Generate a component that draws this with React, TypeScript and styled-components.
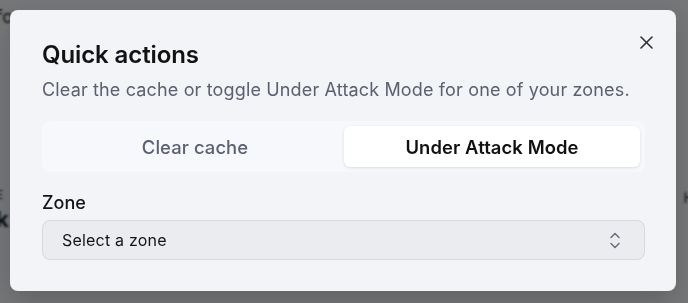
import React, { useState } from "react";
import styled, { createGlobalStyle } from "styled-components";

const Global = createGlobalStyle`
  html, body { margin: 0; padding: 0; }
  body {
    width: 688px; height: 303px; overflow: hidden;
    font-family: Inter, "Noto Sans", sans-serif;
    background: #e9eaee;
  }
`;

const Page = styled.div`
  position: relative;
  width: 688px;
  height: 303px;
  overflow: hidden;
  background: #eef0f3;
  display: flex;
  justify-content: space-between;
`;

const BackText = styled.div<{ $bold?: boolean; $size: number }>`
  font-size: ${(p) => p.$size}px;
  font-weight: ${(p) => (p.$bold ? 700 : 400)};
  color: #111;
  line-height: 1.2;
`;

const BackLayout = styled.div`
  display: flex;
  flex-direction: column;
  gap: 160px;
  padding: 6px 0 0 0;
  margin-left: -4px;
`;

const BackRight = styled.div`
  padding-top: 190px;
  margin-right: -6px;
  color: #555;
`;

const BackGroup = styled.div`
  display: flex;
  flex-direction: column;
  gap: 4px;
`;

const Overlay = styled.div`
  position: absolute;
  inset: 0;
  background: rgba(20, 20, 20, 0.55);
  backdrop-filter: blur(1px);
  display: flex;
  align-items: flex-start;
  justify-content: flex-start;
  padding: 10px 0 0 10px;
`;

const Dialog = styled.div`
  position: relative;
  box-sizing: border-box;
  width: 666px;
  height: 281px;
  background: #f3f4f8;
  border-radius: 8px;
  padding: 29px 32px 0 32px;
  display: flex;
  flex-direction: column;
  box-shadow: 0 10px 30px rgba(0, 0, 0, 0.2);
`;

const Title = styled.h2`
  margin: 0;
  font-size: 24px;
  line-height: 32px;
  font-weight: 600;
  color: #121212;
  letter-spacing: -0.1px;
`;

const Description = styled.p`
  margin: 7px 0 0 0;
  font-size: 18px;
  line-height: 24px;
  color: #5b6070;
  letter-spacing: 0.15px;
`;

const CloseButton = styled.button`
  position: absolute;
  top: 20px;
  right: 18px;
  width: 24px;
  height: 24px;
  padding: 0;
  border: none;
  background: transparent;
  display: flex;
  align-items: center;
  justify-content: center;
  color: #303236;
  cursor: pointer;
`;

const TabList = styled.div`
  margin-top: 19px;
  display: grid;
  grid-template-columns: 1fr 1fr;
  gap: 1px;
  padding: 5px;
  border-radius: 8px;
  background: #f7f8fb;
  width: 603px;
  box-sizing: border-box;
`;

const Tab = styled.button<{ $active?: boolean }>`
  height: 41px;
  border: none;
  border-radius: 6px;
  font-family: inherit;
  font-size: 18.4px;
  font-weight: ${(p) => (p.$active ? 600 : 500)};
  color: ${(p) => (p.$active ? "#111111" : "#5b6072")};
  background: ${(p) => (p.$active ? "#ffffff" : "transparent")};
  box-shadow: ${(p) =>
    p.$active ? "0 1px 3px rgba(20, 25, 40, 0.12)" : "none"};
  cursor: pointer;
  letter-spacing: 0.1px;
`;

const Field = styled.div`
  margin-top: 19px;
  display: flex;
  flex-direction: column;
  gap: 5px;
  width: 603px;
`;

const Label = styled.label`
  font-size: 18px;
  line-height: 24px;
  font-weight: 500;
  color: #141414;
`;

const SelectBox = styled.button`
  box-sizing: border-box;
  height: 40px;
  width: 100%;
  border: 1px solid #d7d9de;
  border-radius: 8px;
  background: #ebecf0;
  display: flex;
  align-items: center;
  justify-content: space-between;
  padding: 0 24px 0 19px;
  font-family: inherit;
  font-size: 16px;
  color: #141414;
  cursor: pointer;
  letter-spacing: 0.2px;
`;

const Chevrons = () => (
  <svg width="10" height="17" viewBox="0 0 10 17" fill="none" stroke="#6b6f7a" strokeWidth="1.5" strokeLinecap="round" strokeLinejoin="round">
    <path d="M1 5.5 L5 1.5 L9 5.5" />
    <path d="M1 11.5 L5 15.5 L9 11.5" />
  </svg>
);

const CloseIcon = () => (
  <svg width="13" height="13" viewBox="0 0 13 13" fill="none" stroke="currentColor" strokeWidth="1.6" strokeLinecap="round">
    <path d="M1 1 L12 12" />
    <path d="M12 1 L1 12" />
  </svg>
);

export default function App() {
  const [tab, setTab] = useState<"clear" | "attack">("attack");
  return (
    <Page>
      <Global />
      <BackLayout>
        <BackText $size={18}>fo</BackText>
        <BackGroup>
          <BackText $size={12}>E</BackText>
          <BackText $size={22} $bold>k</BackText>
        </BackGroup>
      </BackLayout>
      <BackRight>
        <BackText $size={14}>H</BackText>
      </BackRight>
      <Overlay>
        <Dialog role="dialog" aria-labelledby="qa-title">
          <Title id="qa-title">Quick actions</Title>
          <Description>
            Clear the cache or toggle Under Attack Mode for one of your zones.
          </Description>
          <CloseButton aria-label="Close">
            <CloseIcon />
          </CloseButton>
          <TabList role="tablist">
            <Tab $active={tab === "clear"} onClick={() => setTab("clear")}>
              Clear cache
            </Tab>
            <Tab $active={tab === "attack"} onClick={() => setTab("attack")}>
              Under Attack Mode
            </Tab>
          </TabList>
          <Field>
            <Label>Zone</Label>
            <SelectBox>
              <span>Select a zone</span>
              <Chevrons />
            </SelectBox>
          </Field>
        </Dialog>
      </Overlay>
    </Page>
  );
}
